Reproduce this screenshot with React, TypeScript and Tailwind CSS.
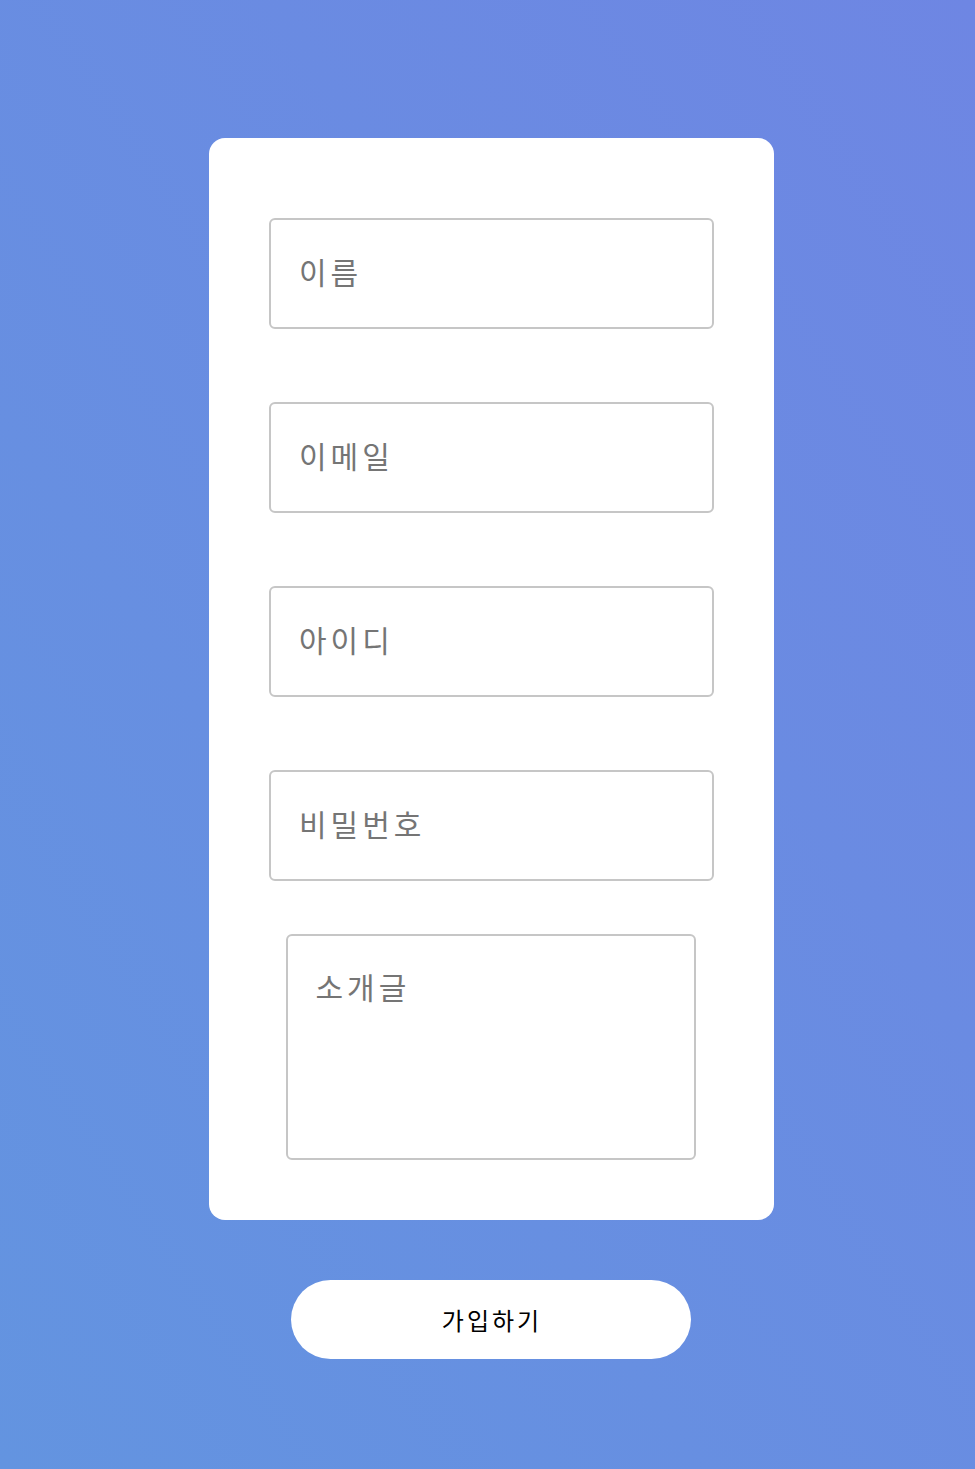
import React from 'react';

const fields = ['이름', '이메일', '아이디', '비밀번호'];

export default function App() {
  return (
    <div
      className="min-h-[1469px] w-full bg-[linear-gradient(to_top_right,#6394e0,#6e86e3)] pl-2 pt-[138px] pb-[110px]"
      style={{ fontFamily: '"Noto Sans CJK KR", "Noto Sans", sans-serif' }}
    >
      <form className="mx-auto flex w-[565px] flex-col items-center rounded-2xl bg-white px-[60px] pt-[80px] pb-[60px]">
        {fields.map((f, i) => (
          <input
            key={f}
            type={f === '비밀번호' ? 'password' : 'text'}
            placeholder={f}
            className={`h-[111px] w-full rounded-md border-2 border-[#c6c6c6] bg-white px-7 pb-[6px] text-[30px] tracking-[4px] text-[#333] outline-none placeholder:text-[#757575] ${
              i < 3 ? 'mb-[73px]' : 'mb-[53px]'
            }`}
          />
        ))}
        <textarea
          placeholder="소개글"
          className="mr-[2px] h-[226px] w-[410px] resize-none rounded-md border-2 border-[#c6c6c6] px-7 pt-[32px] text-[30px] leading-[1.2] tracking-[4px] text-[#333] outline-none placeholder:text-[#757575]"
        />
      </form>
      <div className="mt-[60px] flex justify-center">
        <button
          type="button"
          className="mr-[2px] h-[79px] w-[400px] rounded-full bg-white pl-[3px] text-[24px] tracking-[3px] text-black"
        >
          가입하기
        </button>
      </div>
    </div>
  );
}
